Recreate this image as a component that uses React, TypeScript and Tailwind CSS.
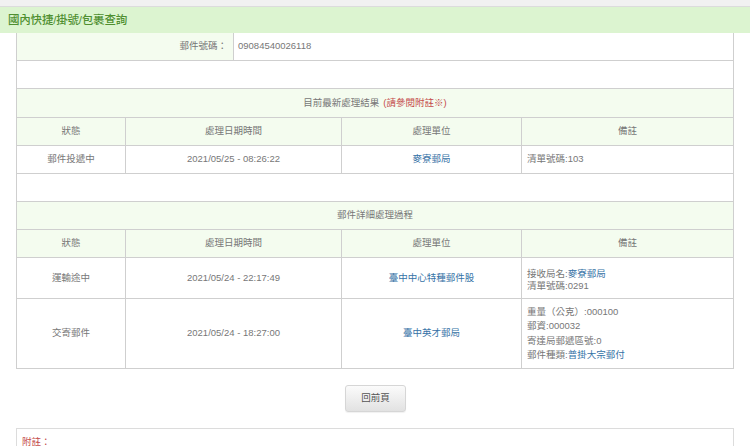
import React from "react";

const font = {
  fontFamily: '"Liberation Sans", "Noto Sans CJK TC", Arial, sans-serif',
};

const cols = ["w-[109px]", "w-[216px]", "w-[180px]", "flex-1"];

function Cell({
  i,
  children,
  className = "",
  last = false,
}: {
  i: number;
  children?: React.ReactNode;
  className?: string;
  last?: boolean;
}) {
  return (
    <div
      className={`${cols[i]} ${last ? "" : "border-r border-[#cfcfcf]"} flex items-center ${className}`}
    >
      {children}
    </div>
  );
}

function HeadRow() {
  const labels = ["狀態", "處理日期時間", "處理單位", "備註"];
  return (
    <div className="flex h-[28px] border-b border-[#cfcfcf] bg-[#f4fcef]">
      {labels.map((l, i) => (
        <Cell key={l} i={i} last={i === 3} className="justify-center">
          {l}
        </Cell>
      ))}
    </div>
  );
}

function Link({ children }: { children: React.ReactNode }) {
  return <span className="text-[#3572a6]">{children}</span>;
}

export default function App() {
  return (
    <div
      className="w-[750px] h-[446px] bg-white overflow-hidden text-[9.5px] text-[#777] font-normal"
      style={font}
    >
      <div className="h-[6px] bg-[#f1f1f1] border-b border-[#dcdcdc] box-content" />
      <div className="h-[26px] bg-[#dcf4d0] flex items-center pl-[8px] pt-[1px] text-[11.5px] text-[#4f8f30] font-medium tracking-[-0.2px]">
        國內快捷/掛號/包裹查詢
      </div>

      <div className="mx-[16px] border-x border-[#cfcfcf]">
        <div className="flex h-[28px] border-b border-[#cfcfcf]">
          <div className="w-[217px] bg-[#f4fcef] border-r border-[#cfcfcf] flex items-center justify-end pr-[6px]">
            郵件號碼：
          </div>
          <div className="flex-1 flex items-center pl-[4px]">09084540026118</div>
        </div>
        <div className="h-[28px] border-b border-[#cfcfcf]" />
        <div className="h-[29px] border-b border-[#cfcfcf] bg-[#f4fcef] flex items-center justify-center">
          目前最新處理結果 <span className="ml-[4px] text-[#c44a4a]">(請參閱附註※)</span>
        </div>
        <HeadRow />
        <div className="flex h-[28px] border-b border-[#cfcfcf]">
          <Cell i={0} className="justify-center">郵件投遞中</Cell>
          <Cell i={1} className="justify-center">2021/05/25 - 08:26:22</Cell>
          <Cell i={2} className="justify-center">
            <Link>麥寮郵局</Link>
          </Cell>
          <Cell i={3} last className="pl-[5px]">清單號碼:103</Cell>
        </div>
        <div className="h-[28px] border-b border-[#cfcfcf]" />
        <div className="h-[28px] border-b border-[#cfcfcf] bg-[#f4fcef] flex items-center justify-center">
          郵件詳細處理過程
        </div>
        <HeadRow />
        <div className="flex h-[41px] border-b border-[#cfcfcf]">
          <Cell i={0} className="justify-center">運輸途中</Cell>
          <Cell i={1} className="justify-center">2021/05/24 - 22:17:49</Cell>
          <Cell i={2} className="justify-center">
            <Link>臺中中心特種郵件股</Link>
          </Cell>
          <Cell i={3} last className="pl-[5px]">
            <div className="leading-[12px] pt-[3px]">
              <div>
                接收局名:<Link>麥寮郵局</Link>
              </div>
              <div>清單號碼:0291</div>
            </div>
          </Cell>
        </div>
        <div className="flex h-[70px] border-b border-[#cfcfcf]">
          <Cell i={0} className="justify-center">交寄郵件</Cell>
          <Cell i={1} className="justify-center">2021/05/24 - 18:27:00</Cell>
          <Cell i={2} className="justify-center">
            <Link>臺中英才郵局</Link>
          </Cell>
          <Cell i={3} last className="pl-[5px]">
            <div className="leading-[14.5px]">
              <div>重量（公克）:000100</div>
              <div>郵資:000032</div>
              <div>寄達局郵遞區號:0</div>
              <div>
                郵件種類:<Link>普掛大宗郵付</Link>
              </div>
            </div>
          </Cell>
        </div>
      </div>

      <div className="flex justify-center mt-[16px] ml-[1px]">
        <button className="w-[61px] h-[27px] rounded-[3px] border border-[#d6d6d6] bg-gradient-to-b from-[#fbfbfb] to-[#e2e2e2] text-[#555] text-[9.5px] shadow-[0_1px_1px_rgba(0,0,0,0.06)]">
          回前頁
        </button>
      </div>

      <div className="mx-[16px] mt-[16px] border border-[#dcdcdc] h-[40px] pl-[5px] pt-[6px] text-[#c44a4a]">
        附註：
      </div>
    </div>
  );
}
